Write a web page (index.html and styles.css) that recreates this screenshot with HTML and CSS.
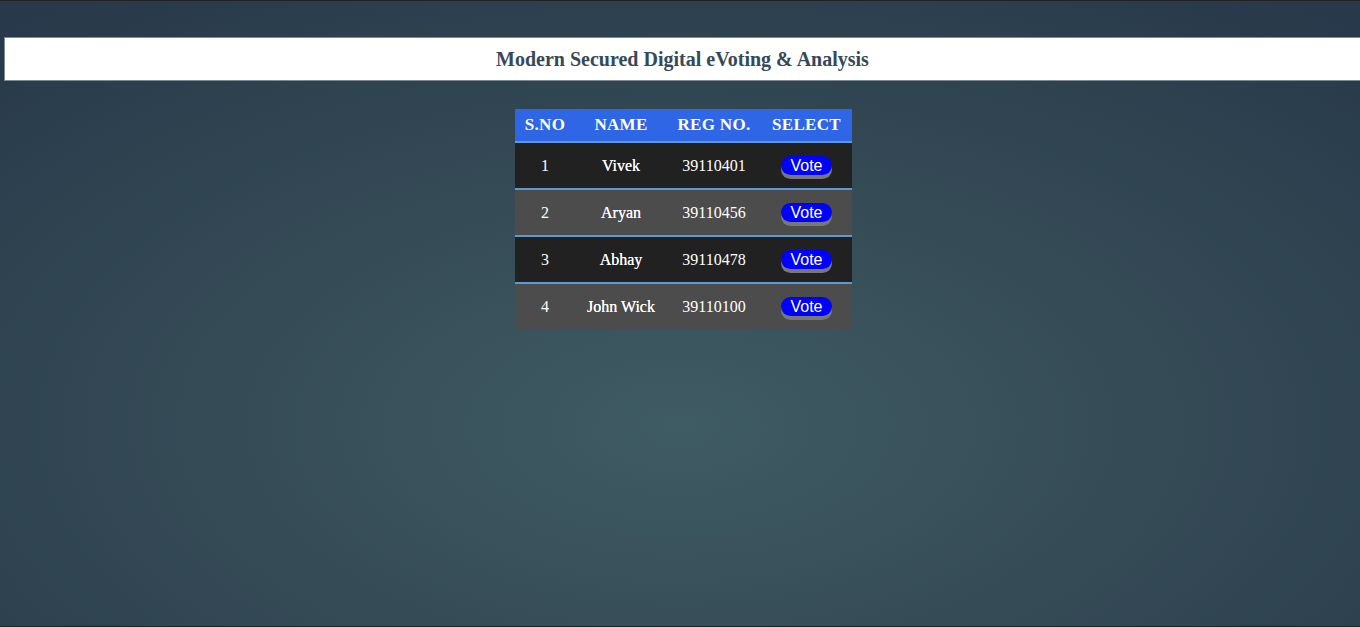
FILE: index.html
```html
<!DOCTYPE html>
<html>
<head>
<meta charset="utf-8">
<title>eVoting</title>
<link rel="stylesheet" href="styles.css">
</head>
<body>
<div class="page">
  <header class="title-bar">
    <h1 class="title">Modern Secured Digital eVoting &amp; Analysis</h1>
  </header>
  <main class="content">
    <table class="vote-table">
      <thead>
        <tr>
          <th class="c-sno">S.NO</th>
          <th class="c-name">NAME</th>
          <th class="c-reg">REG NO.</th>
          <th class="c-sel">SELECT</th>
        </tr>
      </thead>
      <tbody>
        <tr class="row-dark">
          <td>1</td><td class="name">Vivek</td><td>39110401</td><td><button class="vote-btn">Vote</button></td>
        </tr>
        <tr class="row-light">
          <td>2</td><td class="name">Aryan</td><td>39110456</td><td><button class="vote-btn">Vote</button></td>
        </tr>
        <tr class="row-dark">
          <td>3</td><td class="name">Abhay</td><td>39110478</td><td><button class="vote-btn">Vote</button></td>
        </tr>
        <tr class="row-light last">
          <td>4</td><td class="name">John Wick</td><td>39110100</td><td><button class="vote-btn">Vote</button></td>
        </tr>
      </tbody>
    </table>
  </main>
</div>
</body>
</html>
```

FILE: styles.css
```css
html, body {
  margin: 0;
  padding: 0;
  height: 100%;
}
body {
  font-family: "Liberation Serif", "Times New Roman", serif;
  background: radial-gradient(ellipse 75% 85% at 50% 68%, #3f5b63 0%, #344a55 50%, #27394a 100%);
  border-top: 1px solid #222;
  border-bottom: 1px solid #222;
  box-sizing: border-box;
  overflow: hidden;
}
.page {
  display: flex;
  flex-direction: column;
  padding-top: 36px;
}
.title-bar {
  margin-left: 4px;
  background: #fff;
  border: 1px solid #7d8b95;
  border-right: none;
  height: 42px;
  display: flex;
  align-items: center;
  justify-content: center;
}
.title {
  margin: 0;
  font-size: 20px;
  font-weight: bold;
  color: #34495a;
  padding-top: 1px;
}
.content {
  display: flex;
  justify-content: center;
  padding-top: 28px;
  padding-left: 7px;
}
.vote-table {
  border-collapse: collapse;
  width: 337px;
  color: #fff;
  text-align: center;
}
.vote-table th {
  background: #2f66e5;
  font-size: 17px;
  font-weight: bold;
  letter-spacing: 0.3px;
  height: 32px;
  padding: 0;
  border-bottom: 2px solid #5b9bd5;
}
.c-sno { width: 60px; }
.c-name { width: 92px; }
.c-reg { width: 94px; }
.c-sel { width: 91px; }
.vote-table td {
  font-size: 16px;
  height: 45px;
  padding: 0;
  border-bottom: 2px solid #5b9bd5;
}
.vote-table tr.last td {
  border-bottom: none;
  height: 46px;
}
.vote-table td.name {
  text-shadow: 0 0 0.6px #fff;
}
.row-dark td { background: #212121; }
.row-light td { background: #4c4c4c; }
.vote-btn {
  font-family: "Liberation Sans", Arial, sans-serif;
  font-size: 16px;
  color: #fff;
  background: #0000ff;
  border: none;
  border-radius: 10px;
  padding: 0 9px;
  height: 19px;
  line-height: 19px;
  box-shadow: 0 4px 0 #777;
  cursor: pointer;
  margin-top: -1px;
}
```
